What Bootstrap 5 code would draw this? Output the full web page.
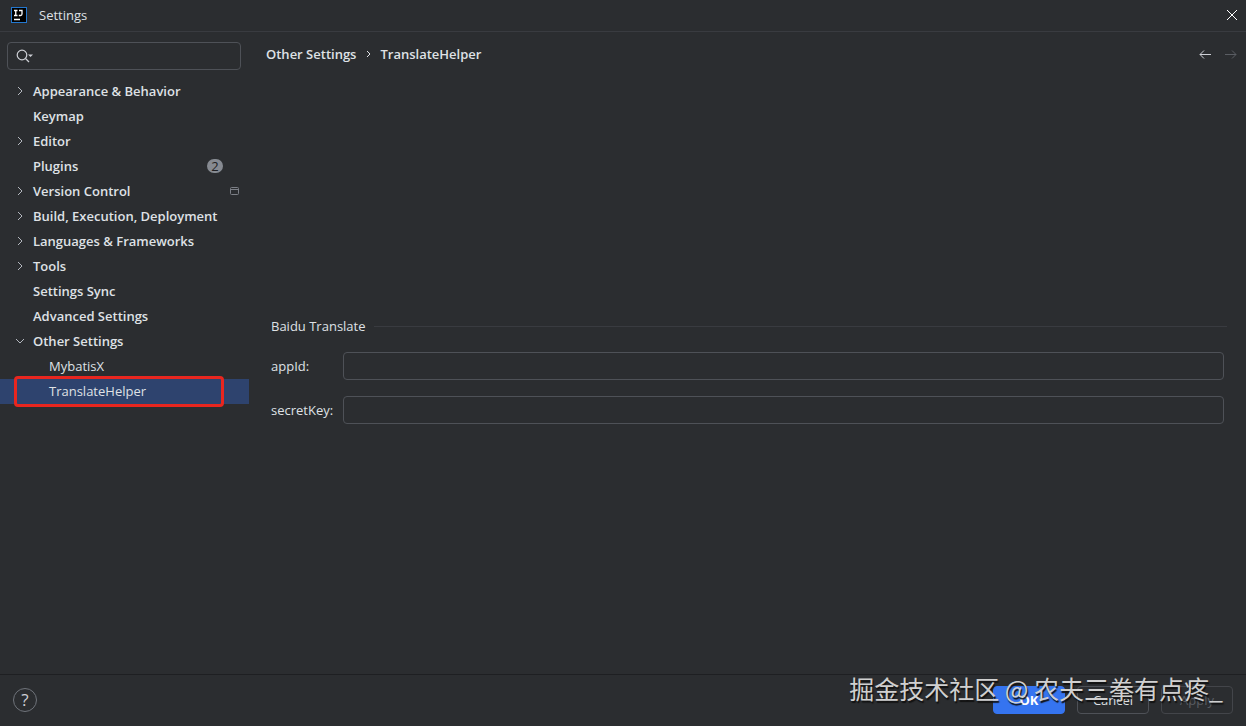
<!DOCTYPE html>
<html lang="en" data-bs-theme="dark">
<head>
<meta charset="utf-8">
<meta name="viewport" content="width=device-width, initial-scale=1">
<title>Settings</title>
<link href="https://cdn.jsdelivr.net/npm/bootstrap@5.3.0/dist/css/bootstrap.min.css" rel="stylesheet">
<style>
  :root { --ide-bg: #2b2d30; --ide-line: #393b40; --ide-field: #4e5157; --ide-text: #dfe1e5; --ide-icon: #ced0d6; }
  body { background: var(--ide-bg); color: var(--ide-text); font: 13px/20px "Open Sans", "Noto Sans", sans-serif; }
  svg { display: block; flex: none; }
  .line-icon { fill: none; stroke: currentColor; }
  .title-bar { height: 32px; padding: 0 8px 2px 11px; border-bottom: 1px solid var(--ide-line); }
  .icon-btn { padding: 0; border: 0; background: none; color: var(--ide-icon); }
  .icon-btn:disabled { color: #5a5d63; }
  .sidebar { width: 249px; padding-top: 10px; }
  .search-box { height: 28px; margin: 0 8px 9px 7px; padding-left: 8px; border: 1px solid var(--ide-field); border-radius: 4px; color: var(--ide-icon); }
  .search-box input { border: 0; outline: 0; background: none; color: inherit; min-width: 0; }
  .tree-row { height: 25px; padding: 0 9px 2px 14px; color: var(--ide-text); font-weight: 600; text-decoration: none; }
  .tree-row .arrow { width: 12px; margin-right: 7px; color: #b4b8bf; flex: none; }
  .tree-row.sub { padding-left: 49px; font-weight: 400; }
  .tree-row.selected { background: #2e436e; }
  .marker { position: absolute; inset: -3px 25px -3px 14px; border: 3px solid #e8261f; border-radius: 4px; pointer-events: none; }
  .count { width: 16px; height: 14px; margin-right: 17px; border-radius: 7px; background: #868a91; color: #1e1f22; font-weight: 400; line-height: 14px; }
  .scope-icon { color: #7d8087; }
  .content { padding: 0 8px 0 17px; }
  .crumbs { height: 46px; padding-bottom: 2px; font-weight: 600; }
  .crumbs a { color: inherit; text-decoration: none; }
  .form-area { padding: 0 11px 12px 5px; }
  .group-title { margin: 0; font-size: 13px; line-height: 20px; font-weight: 400; color: inherit; }
  .group-line { height: 1px; background: var(--ide-line); }
  .field-label { width: 72px; }
  .field { height: 28px; margin-right: 3px; padding: 0 8px; border: 1px solid var(--ide-field); border-radius: 4px; background: none; color: inherit; min-width: 0; }
  .footer { position: relative; height: 52px; padding: 0 13px 2px; border-top: 1px solid #1e1f22; }
  .help { width: 24px; height: 24px; border: 1px solid #6f737a; border-radius: 50%; background: none; color: var(--ide-icon); padding: 0; font-size: 17px; line-height: 22px; }
  .dialog-btn { width: 72px; height: 28px; padding: 0; border: 1px solid var(--ide-field); border-radius: 4px; color: var(--ide-text); font-size: 13px; line-height: 20px; }
  .dialog-btn.main { background: #3574f0; border-color: #3574f0; color: #fff; font-weight: 700; }
  .dialog-btn:disabled { border-color: #43454a; color: #5a5d63; opacity: 1; }
  .watermark { position: absolute; right: 23px; top: -6px; font: 25px/38px "Noto Sans CJK SC", sans-serif; color: #d0d0d0; text-shadow: 1px 2px 1px #111; white-space: nowrap; pointer-events: none; }
</style>
</head>
<body>
<div class="d-flex flex-column vh-100 overflow-hidden">
  <header class="title-bar d-flex align-items-center">
    <svg width="16" height="16" viewBox="0 0 16 16" fill="none"><rect x=".5" y=".5" width="15" height="15" fill="#000" stroke="#2478cf"/><path d="M3 3.500h3.500M4.750 3.500v5M3 8.500h3.500M8 3.500h3v3.500q0 1.500-1.500 1.500H7.800M3 12.500h6" stroke="#fff" stroke-width="1.300"/></svg>
    <span class="ms-2 ps-1">Settings</span>
    <button class="icon-btn ms-auto text-white" type="button" aria-label="Close"><svg class="line-icon" width="12" height="12" viewBox="0 0 12 12"><path d="M1 1l10 10M11 1L1 11"/></svg></button>
  </header>

  <div class="d-flex flex-grow-1">
    <aside class="sidebar flex-shrink-0">
      <div class="search-box d-flex align-items-center">
        <svg class="line-icon" width="18" height="16" viewBox="0 0 18 16"><circle cx="6" cy="7" r="4.800" stroke-width="1.200"/><path d="M9.500 10.500l3.500 3.500" stroke-width="1.200"/><path d="M12 6.500h5L14.500 9z" fill="currentColor" stroke="none"/></svg>
        <input class="flex-grow-1" type="text" aria-label="Search settings">
      </div>
      <nav aria-label="Settings">
        <ul class="list-unstyled m-0">
          <li><a href="#" class="tree-row d-flex align-items-center"><span class="arrow"><svg class="line-icon" width="12" height="12" viewBox="0 0 12 12"><path d="M4 2l4 4-4 4"/></svg></span>Appearance &amp; Behavior</a></li>
          <li><a href="#" class="tree-row d-flex align-items-center"><span class="arrow"></span>Keymap</a></li>
          <li><a href="#" class="tree-row d-flex align-items-center"><span class="arrow"><svg class="line-icon" width="12" height="12" viewBox="0 0 12 12"><path d="M4 2l4 4-4 4"/></svg></span>Editor</a></li>
          <li><a href="#" class="tree-row d-flex align-items-center"><span class="arrow"></span>Plugins<span class="count ms-auto text-center">2</span></a></li>
          <li><a href="#" class="tree-row d-flex align-items-center"><span class="arrow"><svg class="line-icon" width="12" height="12" viewBox="0 0 12 12"><path d="M4 2l4 4-4 4"/></svg></span>Version Control<svg class="line-icon scope-icon ms-auto" width="11" height="10" viewBox="0 0 11 10"><rect x="1.500" y="1.500" width="8" height="7" rx="1"/><path d="M1.500 3.500h8"/></svg></a></li>
          <li><a href="#" class="tree-row d-flex align-items-center"><span class="arrow"><svg class="line-icon" width="12" height="12" viewBox="0 0 12 12"><path d="M4 2l4 4-4 4"/></svg></span>Build, Execution, Deployment</a></li>
          <li><a href="#" class="tree-row d-flex align-items-center"><span class="arrow"><svg class="line-icon" width="12" height="12" viewBox="0 0 12 12"><path d="M4 2l4 4-4 4"/></svg></span>Languages &amp; Frameworks</a></li>
          <li><a href="#" class="tree-row d-flex align-items-center"><span class="arrow"><svg class="line-icon" width="12" height="12" viewBox="0 0 12 12"><path d="M4 2l4 4-4 4"/></svg></span>Tools</a></li>
          <li><a href="#" class="tree-row d-flex align-items-center"><span class="arrow"></span>Settings Sync</a></li>
          <li><a href="#" class="tree-row d-flex align-items-center"><span class="arrow"></span>Advanced Settings</a></li>
          <li><a href="#" class="tree-row d-flex align-items-center"><span class="arrow"><svg class="line-icon" width="12" height="12" viewBox="0 0 12 12"><path d="M2 4l4 4 4-4"/></svg></span>Other Settings</a>
            <ul class="list-unstyled m-0">
              <li><a href="#" class="tree-row sub d-flex align-items-center">MybatisX</a></li>
              <li class="position-relative"><a href="#" class="tree-row sub selected d-flex align-items-center" aria-current="page">TranslateHelper</a><span class="marker"></span></li>
            </ul>
          </li>
        </ul>
      </nav>
    </aside>

    <main class="content d-flex flex-column flex-grow-1">
      <div class="crumbs d-flex align-items-center">
        <a href="#">Other Settings</a>
        <svg class="line-icon mx-2" width="8" height="10" viewBox="0 0 8 10"><path d="M3 2l3 3-3 3"/></svg>
        <span>TranslateHelper</span>
        <button class="icon-btn ms-auto" type="button" aria-label="Back"><svg class="line-icon" width="14" height="12" viewBox="0 0 14 12"><path d="M13 6.500H2M6 2.500l-4 4 4 4"/></svg></button>
        <button class="icon-btn ms-2 ps-1" type="button" aria-label="Forward" disabled><svg class="line-icon" width="14" height="12" viewBox="0 0 14 12"><path d="M1 6.500h11M8 2.500l4 4-4 4"/></svg></button>
      </div>
      <form class="form-area d-flex flex-column flex-grow-1 justify-content-center gap-3">
        <div class="d-flex align-items-center gap-2">
          <h2 class="group-title">Baidu Translate</h2>
          <div class="group-line flex-grow-1"></div>
        </div>
        <div class="d-flex align-items-center">
          <label class="field-label" for="appId">appId:</label>
          <input class="field flex-grow-1" id="appId" type="text">
        </div>
        <div class="d-flex align-items-center">
          <label class="field-label" for="secretKey">secretKey:</label>
          <input class="field flex-grow-1" id="secretKey" type="text">
        </div>
      </form>
    </main>
  </div>

  <footer class="footer d-flex align-items-center flex-shrink-0">
    <button class="help" type="button" aria-label="Help">?</button>
    <div class="d-flex ms-auto gap-2">
      <button class="btn dialog-btn main me-1" type="button">OK</button>
      <button class="btn dialog-btn me-1" type="button">Cancel</button>
      <button class="btn dialog-btn" type="button" disabled>Apply</button>
    </div>
    <div class="watermark">掘金技术社区 @ 农夫三拳有点疼_</div>
  </footer>
</div>
<script src="https://cdn.jsdelivr.net/npm/bootstrap@5.3.0/dist/js/bootstrap.bundle.min.js"></script>
</body>
</html>
